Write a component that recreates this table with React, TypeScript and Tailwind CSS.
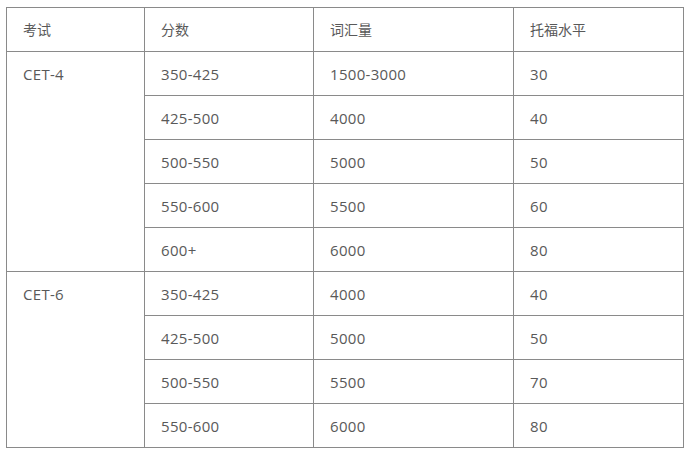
const groups = [
  {
    exam: "CET-4",
    rows: [
      ["350-425", "1500-3000", "30"],
      ["425-500", "4000", "40"],
      ["500-550", "5000", "50"],
      ["550-600", "5500", "60"],
      ["600+", "6000", "80"],
    ],
  },
  {
    exam: "CET-6",
    rows: [
      ["350-425", "4000", "40"],
      ["425-500", "5000", "50"],
      ["500-550", "5500", "70"],
      ["550-600", "6000", "80"],
    ],
  },
];

const cell =
  "border border-[#8a8a8a] px-4 pt-[12px] pb-[11px] align-top text-left font-normal";
const body = cell + " text-[15px] tracking-[0.3px]";

export default function App() {
  return (
    <div className="min-h-[455px] w-[694px] bg-white pl-[6px] pt-[7px] font-['Open_Sans','Noto_Sans_CJK_SC',sans-serif] text-[14px] leading-[20px] text-[#595959]">
      <table className="w-[677px] table-fixed border-collapse">
        <colgroup>
          <col className="w-[138px]" />
          <col className="w-[169px]" />
          <col className="w-[200px]" />
          <col className="w-[170px]" />
        </colgroup>
        <thead>
          <tr className="h-[44px]">
            <th className={cell}>考试</th>
            <th className={cell}>分数</th>
            <th className={cell}>词汇量</th>
            <th className={cell}>托福水平</th>
          </tr>
        </thead>
        <tbody>
          {groups.map((g) =>
            g.rows.map((r, i) => (
              <tr key={g.exam + i} className="h-[44px]">
                {i === 0 && (
                  <td rowSpan={g.rows.length} className={body}>
                    {g.exam}
                  </td>
                )}
                {r.map((v, j) => (
                  <td key={j} className={body}>
                    {v}
                  </td>
                ))}
              </tr>
            ))
          )}
        </tbody>
      </table>
    </div>
  );
}
